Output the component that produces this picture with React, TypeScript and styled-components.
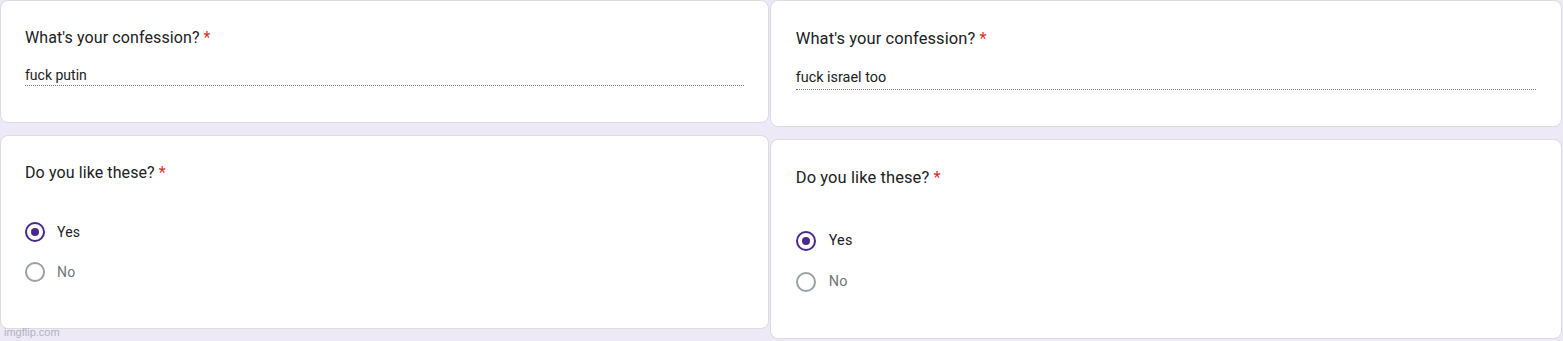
import React from 'react'
import styled, { createGlobalStyle } from 'styled-components'

const GlobalStyle = createGlobalStyle`
  html, body {
    margin: 0;
    padding: 0;
    background: #ede9f7;
  }
  body {
    font-family: Roboto, "Noto Sans", Arial, sans-serif;
    color: #202124;
  }
`

const Page = styled.div`
  position: relative;
  display: flex;
  gap: 1px;
  width: 1563px;
  height: 341px;
  overflow: hidden;
  background: #ede9f7;
`

const Column = styled.div<{ $scale: number }>`
  zoom: ${(p) => p.$scale};
  width: 769px;
  display: flex;
  flex-direction: column;
  gap: 12px;
`

// $drop pushes the content a little lower inside the same card height
const Card = styled.div<{ $drop?: number }>`
  background: #fff;
  border: 1px solid #dadce0;
  border-radius: 8px;
  padding: 25px 24px ${(p) => 36 - (p.$drop || 0)}px;
`

const Title = styled.div`
  font-size: 16px;
  line-height: 24px;
  letter-spacing: 0.1px;
  color: #202124;
`

const Required = styled.span`
  color: #d93025;
  margin-left: 4px;
`

const Answer = styled.div<{ $gap: number }>`
  margin-top: ${(p) => p.$gap}px;
  font-size: 14px;
  line-height: 20px;
  border-bottom: 1px dotted #7a7a7a;
  color: #202124;
`

const Options = styled.div<{ $gap: number }>`
  margin-top: ${(p) => p.$gap}px;
  display: flex;
  flex-direction: column;
`

const Option = styled.div`
  height: 40px;
  display: flex;
  align-items: center;
  gap: 12px;
`

const Radio = styled.span<{ $checked?: boolean }>`
  box-sizing: border-box;
  width: 20px;
  height: 20px;
  border-radius: 50%;
  border: 2px solid ${(p) => (p.$checked ? '#4a288c' : '#9aa0a6')};
  display: flex;
  align-items: center;
  justify-content: center;

  &::after {
    content: '';
    display: ${(p) => (p.$checked ? 'block' : 'none')};
    width: 8px;
    height: 8px;
    border-radius: 50%;
    background: #4a288c;
  }
`

const Label = styled.span<{ $checked?: boolean }>`
  font-size: 14px;
  line-height: 20px;
  letter-spacing: 0.2px;
  color: ${(p) => (p.$checked ? '#202124' : '#70757a')};
`

const Watermark = styled.div`
  position: absolute;
  left: 4px;
  bottom: 2px;
  font-family: "Liberation Sans", Arial, sans-serif;
  font-size: 11px;
  line-height: 13px;
  color: #b3b1bf;
`

interface iFormShot {
  confession: string
  scale: number
  drop: number
}

const FormShot: React.FC<iFormShot> = ({ confession, scale, drop }) => (
  <Column $scale={scale}>
    <Card $drop={drop}>
      <Title>
        What's your confession?<Required>*</Required>
      </Title>
      <Answer $gap={15 + drop}>{confession}</Answer>
    </Card>
    <Card $drop={drop * 2}>
      <Title>
        Do you like these?<Required>*</Required>
      </Title>
      <Options $gap={27 + drop * 2}>
        <Option>
          <Radio $checked />
          <Label $checked>Yes</Label>
        </Option>
        <Option>
          <Radio />
          <Label>No</Label>
        </Option>
      </Options>
    </Card>
  </Column>
)

const App = () => (
  <>
    <GlobalStyle />
    <Page>
      <FormShot confession="fuck putin" scale={1} drop={0} />
      <FormShot confession="fuck israel too" scale={1.03} drop={1} />
      <Watermark>imgflip.com</Watermark>
    </Page>
  </>
)

export default App
